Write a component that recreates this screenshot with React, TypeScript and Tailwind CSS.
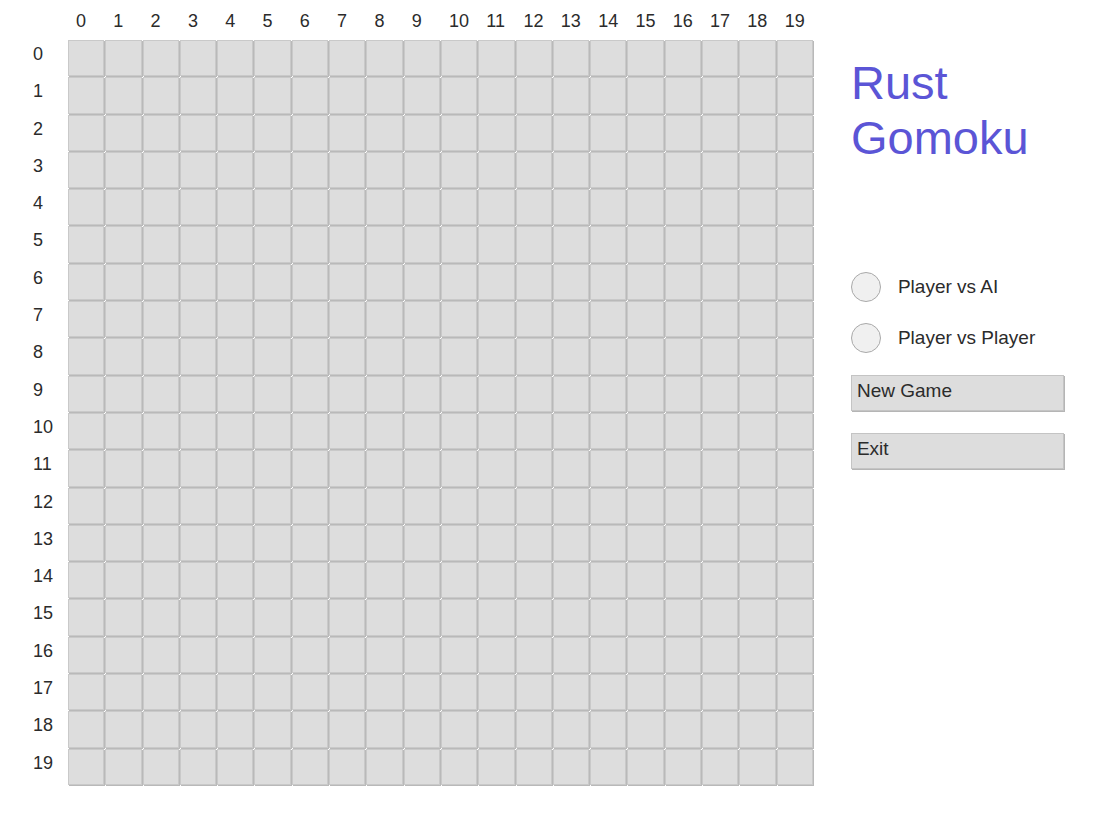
import React from "react";

const N = Array.from({ length: 20 }, (_, i) => i);

export default function App() {
  return (
    <div
      className="min-h-screen bg-white flex flex-row pl-[33px] pt-[11px] text-[#2b2b2b]"
      style={{ fontFamily: '"Liberation Sans", Arial, sans-serif' }}
    >
      <div className="grid grid-cols-[34px_repeat(20,36.3px)] grid-rows-[28px_repeat(20,36.3px)] gap-[1px]">
        <div />
        {N.map((c) => (
          <div key={"h" + c} className="text-[18px] leading-[21px] pl-[8px]">
            {c}
          </div>
        ))}
        {N.map((r) => (
          <React.Fragment key={"r" + r}>
            <div className="text-[18px] leading-[21px] pt-[4px]">{r}</div>
            {N.map((c) => (
              <div
                key={r + "-" + c}
                className="bg-[#dddddd] border border-[#c9c9c9] shadow-[1px_1px_0_#b9b9b9]"
              />
            ))}
          </React.Fragment>
        ))}
      </div>
      <div className="ml-[38px] flex flex-col w-[213px]">
        <div className="mt-[44px] text-[47px] leading-[55px] text-[#5b55d6]">
          Rust
          <br />
          Gomoku
        </div>
        <div className="mt-[107px] flex flex-col gap-[21px]">
          <div className="flex items-center h-[30px]">
            <div className="w-[30px] h-[30px] rounded-full bg-[#f0f0f0] border border-[#a9a9a9]" />
            <span className="ml-[17px] text-[19px]">Player vs AI</span>
          </div>
          <div className="flex items-center h-[30px]">
            <div className="w-[30px] h-[30px] rounded-full bg-[#f0f0f0] border border-[#a9a9a9]" />
            <span className="ml-[17px] text-[19px]">Player vs Player</span>
          </div>
        </div>
        <div className="mt-[22px] flex flex-col gap-[22px]">
          <div className="h-[36px] bg-[#dddddd] border border-[#c4c4c4] shadow-[1px_1px_0_#b5b5b5] pl-[5px] pt-[3px] text-[19px] leading-[24px]">
            New Game
          </div>
          <div className="h-[36px] bg-[#dddddd] border border-[#c4c4c4] shadow-[1px_1px_0_#b5b5b5] pl-[5px] pt-[3px] text-[19px] leading-[24px]">
            Exit
          </div>
        </div>
      </div>
    </div>
  );
}
